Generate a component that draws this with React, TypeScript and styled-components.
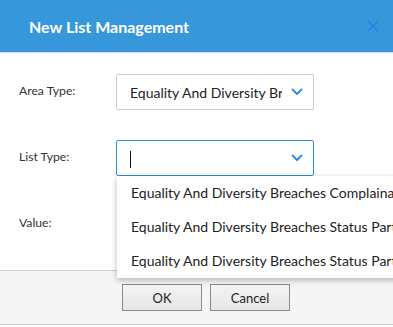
import React from "react";
import styled, { createGlobalStyle } from "styled-components";

const GlobalStyle = createGlobalStyle`
  html, body {
    margin: 0;
    padding: 0;
    overflow: hidden;
    background: #ffffff;
  }
  body {
    font-family: Lato, "Open Sans", Arial, sans-serif;
  }
`;

const listOptions = [
  "Equality And Diversity Breaches Complainant Type",
  "Equality And Diversity Breaches Status Party",
  "Equality And Diversity Breaches Status Party Type",
];

const Dialog = styled.div`
  position: relative;
  width: 393px;
  height: 327px;
  background: #fff;
  overflow: hidden;
`;

const Header = styled.div`
  height: 52px;
  background: #3797db;
  border-bottom: 1px solid #cfe2f1;
  display: flex;
  align-items: center;
  justify-content: space-between;
  padding: 0 12px 0 29px;
`;

const Title = styled.h2`
  margin: 0;
  color: #fff;
  font-size: 16px;
  font-weight: 700;
`;

const CloseBtn = styled.button`
  border: 0;
  background: transparent;
  padding: 0;
  width: 16px;
  height: 16px;
  display: flex;
  align-items: center;
  justify-content: center;
  cursor: pointer;
`;

const Body = styled.div`
  padding: 21px 0 28px 19px;
  display: grid;
  grid-template-columns: 97px 198px;
  grid-auto-rows: 36px;
  row-gap: 30px;
  align-items: center;
`;

const Label = styled.label`
  font-size: 12.2px;
  color: #333;
  margin-top: -4px;
`;

const Select = styled.div<{ $focused?: boolean }>`
  position: relative;
  box-sizing: border-box;
  height: 36px;
  border: 1px solid ${(p) => (p.$focused ? "#2f8df0" : "#cccccc")};
  border-radius: 2px;
  display: flex;
  align-items: center;
  gap: 9px;
  padding: 0 10px 0 13px;
  font-size: 14px;
  color: #222;
`;

const SelectText = styled.span`
  flex: 1;
  min-width: 0;
  white-space: nowrap;
  overflow: hidden;
`;

const Caret = styled.span`
  width: 1px;
  height: 17px;
  background: #111;
  flex: none;
  margin-top: 2px;
`;

const Spacer = styled.span`
  flex: 1;
`;

const Dropdown = styled.ul`
  position: absolute;
  left: 117px;
  top: 176px;
  width: 320px;
  margin: 0;
  padding: 0;
  list-style: none;
  background: #fff;
  box-shadow: 0 2px 6px rgba(0, 0, 0, 0.28);
  z-index: 5;
`;

const Option = styled.li`
  height: 34px;
  line-height: 34px;
  padding-left: 14px;
  font-size: 14px;
  color: #222;
  white-space: nowrap;
  overflow: hidden;
`;

const Footer = styled.div`
  height: 55px;
  box-sizing: border-box;
  background: #f5f5f5;
  border-top: 1px solid #cfcfcf;
  border-bottom: 1px solid #cfcfcf;
  padding: 13px 0 0 122px;
  display: flex;
  gap: 8px;
  align-items: flex-start;
`;

const Button = styled.button`
  width: 80px;
  height: 27px;
  box-sizing: border-box;
  border: 1px solid #8a8a8a;
  background: linear-gradient(#f4f4f4, #e6e6e6);
  font-family: Lato, "Open Sans", Arial, sans-serif;
  font-size: 13px;
  color: #222;
  padding: 0;
`;

const Chevron = () => (
  <svg width="12" height="8" viewBox="0 0 12 8" style={{ flex: "none" }}>
    <polyline
      points="1.5,1.5 6,6 10.5,1.5"
      fill="none"
      stroke="#2a88e6"
      strokeWidth="1.8"
      strokeLinecap="round"
      strokeLinejoin="round"
    />
  </svg>
);

const CloseIcon = () => (
  <svg width="12" height="12" viewBox="0 0 12 12">
    <path d="M1 1L11 11M11 1L1 11" stroke="#1d85ea" strokeWidth="1.6" />
  </svg>
);

export default function App() {
  return (
    <Dialog>
      <GlobalStyle />
      <Header>
        <Title>New List Management</Title>
        <CloseBtn aria-label="Close">
          <CloseIcon />
        </CloseBtn>
      </Header>
      <Body>
        <Label>Area Type:</Label>
        <Select>
          <SelectText>Equality And Diversity Breaches</SelectText>
          <Chevron />
        </Select>
        <Label>List Type:</Label>
        <Select $focused>
          <Caret />
          <Spacer />
          <Chevron />
        </Select>
        <Label>Value:</Label>
        <div />
      </Body>
      <Dropdown>
        {listOptions.map((o) => (
          <Option key={o}>{o}</Option>
        ))}
      </Dropdown>
      <Footer>
        <Button>OK</Button>
        <Button>Cancel</Button>
      </Footer>
    </Dialog>
  );
}
